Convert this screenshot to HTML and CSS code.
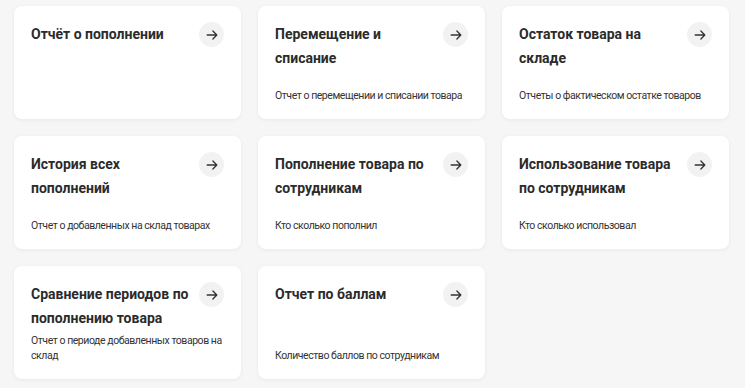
FILE: index.html
```html
<!DOCTYPE html>
<html lang="ru">
<head>
  <meta charset="UTF-8" />
  <title>Отчёты</title>
  <link rel="stylesheet" href="styles.css">
</head>
<body>
  <div class="reports">
    <a class="report-card">
      <div class="report-head">
        <h3 class="report-title">Отчёт о пополнении</h3>
        <span class="arrow-btn"><svg viewBox="0 0 16 16"><path d="M2.5 8h11M9 3.5L13.5 8 9 12.5"/></svg></span>
      </div>
    </a>
    <a class="report-card">
      <div class="report-head">
        <h3 class="report-title">Перемещение и списание</h3>
        <span class="arrow-btn"><svg viewBox="0 0 16 16"><path d="M2.5 8h11M9 3.5L13.5 8 9 12.5"/></svg></span>
      </div>
      <p class="report-desc">Отчет о перемещении и списании товара</p>
    </a>
    <a class="report-card">
      <div class="report-head">
        <h3 class="report-title">Остаток товара на складе</h3>
        <span class="arrow-btn"><svg viewBox="0 0 16 16"><path d="M2.5 8h11M9 3.5L13.5 8 9 12.5"/></svg></span>
      </div>
      <p class="report-desc">Отчеты о фактическом остатке товаров</p>
    </a>
    <a class="report-card">
      <div class="report-head">
        <h3 class="report-title">История всех пополнений</h3>
        <span class="arrow-btn"><svg viewBox="0 0 16 16"><path d="M2.5 8h11M9 3.5L13.5 8 9 12.5"/></svg></span>
      </div>
      <p class="report-desc">Отчет о добавленных на склад товарах</p>
    </a>
    <a class="report-card">
      <div class="report-head">
        <h3 class="report-title">Пополнение товара по сотрудникам</h3>
        <span class="arrow-btn"><svg viewBox="0 0 16 16"><path d="M2.5 8h11M9 3.5L13.5 8 9 12.5"/></svg></span>
      </div>
      <p class="report-desc">Кто сколько пополнил</p>
    </a>
    <a class="report-card">
      <div class="report-head">
        <h3 class="report-title">Использование товара по сотрудникам</h3>
        <span class="arrow-btn"><svg viewBox="0 0 16 16"><path d="M2.5 8h11M9 3.5L13.5 8 9 12.5"/></svg></span>
      </div>
      <p class="report-desc">Кто сколько использовал</p>
    </a>
    <a class="report-card">
      <div class="report-head">
        <h3 class="report-title">Сравнение периодов по пополнению товара</h3>
        <span class="arrow-btn"><svg viewBox="0 0 16 16"><path d="M2.5 8h11M9 3.5L13.5 8 9 12.5"/></svg></span>
      </div>
      <p class="report-desc">Отчет о периоде добавленных товаров на склад</p>
    </a>
    <a class="report-card">
      <div class="report-head">
        <h3 class="report-title">Отчет по баллам</h3>
        <span class="arrow-btn"><svg viewBox="0 0 16 16"><path d="M2.5 8h11M9 3.5L13.5 8 9 12.5"/></svg></span>
      </div>
      <p class="report-desc">Количество баллов по сотрудникам</p>
    </a>
  </div>
</body>
</html>
```

FILE: styles.css
```css
body {
  margin: 0;
  background: #f6f6f6;
  font-family: Roboto, 'Noto Sans', sans-serif;
  color: #2b2b2b;
}
.reports {
  display: grid;
  grid-template-columns: repeat(3, 227px);
  grid-auto-rows: 113px;
  column-gap: 17px;
  row-gap: 17px;
  padding: 6px 14px;
}
.report-card {
  background: #fff;
  border-radius: 8px;
  box-shadow: 0 1px 4px rgba(0, 0, 0, 0.06);
  padding: 16px 17px 16px 17px;
  display: flex;
  flex-direction: column;
  box-sizing: border-box;
  cursor: pointer;
}
.report-head {
  display: flex;
  justify-content: space-between;
  align-items: flex-start;
  gap: 4px;
}
.report-title {
  margin: 0;
  font-size: 14px;
  font-weight: 700;
  line-height: 24px;
  color: #2b2b2b;
  max-width: 165px;
}
.arrow-btn {
  flex: none;
  width: 25px;
  height: 25px;
  border-radius: 50%;
  background: #f2f2f2;
  display: flex;
  align-items: center;
  justify-content: center;
}
.arrow-btn svg {
  width: 14px;
  height: 14px;
  fill: none;
  stroke: #333;
  stroke-width: 1.5;
  stroke-linecap: round;
  stroke-linejoin: round;
}
.report-desc {
  margin: auto 0 0 0;
  font-size: 10.5px;
  letter-spacing: -0.45px;
  line-height: 15px;
  color: #333;
}
```
